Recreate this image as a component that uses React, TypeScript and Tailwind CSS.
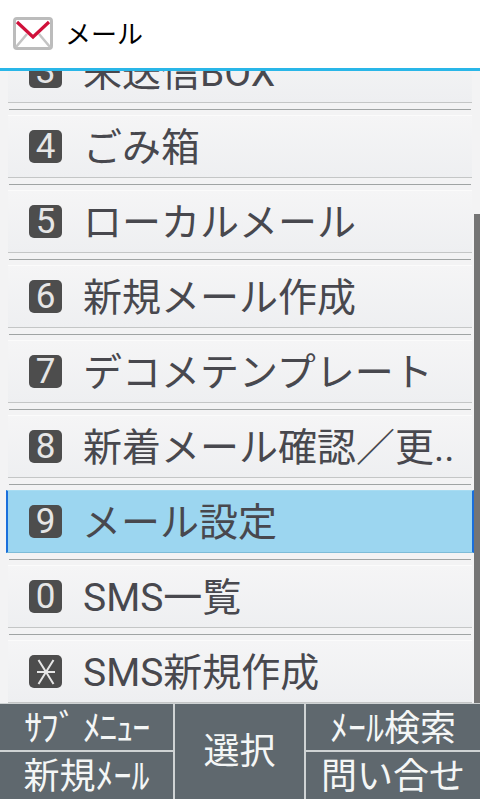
const font = { fontFamily: 'Roboto, "Noto Sans CJK JP", sans-serif' };

const rows = [
  { key: '3', label: '未送信BOX' },
  { key: '4', label: 'ごみ箱' },
  { key: '5', label: 'ローカルメール' },
  { key: '6', label: '新規メール作成' },
  { key: '7', label: 'デコメテンプレート' },
  { key: '8', label: '新着メール確認／更..' },
  { key: '9', label: 'メール設定', selected: true },
  { key: '0', label: 'SMS一覧' },
  { key: 'x', label: 'SMS新規作成' },
];

function MailIcon() {
  return (
    <svg width="40" height="34" viewBox="0 0 40 34" className="shrink-0">
      <rect x="1.5" y="1.5" width="37" height="30" rx="2.5" fill="#fff" stroke="#bcbcbc" strokeWidth="3" />
      <path d="M3 30 L14 17 M37 30 L26 17" stroke="#c4c4c4" strokeWidth="2.5" fill="none" />
      <path d="M4 5 L20 20 L36 5" stroke="#d0103a" strokeWidth="3.2" fill="none" />
    </svg>
  );
}

function KeyBadge({ k }: { k: string }) {
  return (
    <div className="w-[33px] h-[33px] rounded-[5px] bg-[#4d4d4d] flex items-center justify-center text-[#e6e6e6] text-[35px] leading-none shrink-0">
      {k === 'x' ? (
        <svg width="20" height="26" viewBox="0 0 20 26">
          <path d="M2.5 1 L17.5 25 M17.5 1 L2.5 25 M1 13 H19" stroke="#e6e6e6" strokeWidth="2" fill="none" />
        </svg>
      ) : (
        k
      )}
    </div>
  );
}

function MenuRow({ k, label, selected }: { k: string; label: string; selected?: boolean }) {
  return (
    <div className="shrink-0">
      <div
        className={
          selected
            ? 'h-[63px] mx-[6px] flex items-center pl-[21px] bg-[#9cd6f0] border-x-2 border-x-[#1a6fdc] border-t border-t-[#a8dcf2] border-b border-b-[#7dbcd8]'
            : 'h-[63px] mx-[8px] flex items-center pl-[21px] bg-gradient-to-b from-[#f5f5f6] to-[#eeeff1] border-t border-t-[#fbfbfb] border-b border-b-[#c4c6c6]'
        }
      >
        <KeyBadge k={k} />
        <span className={selected ? 'ml-[20px] pt-[3px] text-[39px] leading-none whitespace-nowrap text-[#48484e]' : 'ml-[21px] pt-[3px] text-[39px] leading-none whitespace-nowrap text-[#48484e]'}>
          {label}
        </span>
      </div>
      <div className="h-[12px] pt-[6px]">
        <div className="h-px mx-[9px] bg-[#a0a4a4]" />
      </div>
    </div>
  );
}

function FooterCell({ label, className }: { label: string; className: string }) {
  return (
    <div className={'flex items-center justify-center bg-[#5f686e] text-[#f4f6f6] whitespace-nowrap leading-none ' + className}>
      {label}
    </div>
  );
}

export default function App() {
  return (
    <div className="w-[480px] h-[799px] flex flex-col overflow-hidden bg-[#f3f3f4] relative" style={font}>
      {/* Header */}
      <div className="h-[71px] shrink-0 bg-white border-b-[3px] border-b-[#29b6e8] flex items-center pl-[13px] relative z-10">
        <MailIcon />
        <span className="ml-[12px] pt-[1px] text-[26px] leading-none text-black">メール</span>
      </div>

      {/* Menu list */}
      <div className="flex-1 overflow-hidden relative">
        <div className="flex flex-col mt-[-31px]">
          {rows.map((r) => (
            <MenuRow key={r.key} k={r.key} label={r.label} selected={r.selected} />
          ))}
        </div>
        <div className="absolute right-0 top-[143px] bottom-0 w-[6px] bg-[#757575]" />
      </div>

      {/* Softkeys */}
      <div className="h-[96px] shrink-0 grid grid-cols-[173px_129px_174px] grid-rows-[46px_47px] gap-[2px] bg-[#cfd3d4] border-t border-t-[#cfd3d4]">
        <FooterCell label="ｻﾌﾞ ﾒﾆｭｰ" className="pt-[3px] text-[36px] tracking-[-1.5px]" />
        <FooterCell label="選択" className="row-span-2 text-[36px]" />
        <FooterCell label="ﾒｰﾙ検索" className="pt-[3px] text-[36px]" />
        <FooterCell label="新規ﾒｰﾙ" className="pt-[3px] text-[36px]" />
        <FooterCell label="問い合せ" className="pt-[3px] text-[36px]" />
      </div>
    </div>
  );
}
